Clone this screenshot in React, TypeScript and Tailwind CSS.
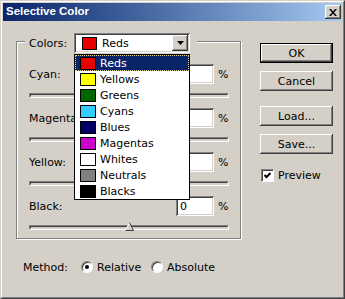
import React from "react";

type ColorItem = { name: string; swatch: string };

const COLORS: ColorItem[] = [
  { name: "Reds", swatch: "bg-[#e60000]" },
  { name: "Yellows", swatch: "bg-[#ffff00]" },
  { name: "Greens", swatch: "bg-[#006600]" },
  { name: "Cyans", swatch: "bg-[#33ccff]" },
  { name: "Blues", swatch: "bg-[#000066]" },
  { name: "Magentas", swatch: "bg-[#cc00cc]" },
  { name: "Whites", swatch: "bg-white" },
  { name: "Neutrals", swatch: "bg-[#808080]" },
  { name: "Blacks", swatch: "bg-black" },
];

const SLIDERS = ["Cyan:", "Magenta:", "Yellow:", "Black:"];

// classic win32 bevels
const raised =
  "shadow-[inset_-1px_-1px_#404040,inset_1px_1px_#ffffff,inset_-2px_-2px_#808080]";
const sunken =
  "shadow-[inset_1px_1px_#808080,inset_-1px_-1px_#ffffff,inset_2px_2px_#404040,inset_-2px_-2px_#d4d0c8]";

function Button({ label, primary }: { label: string; primary?: boolean }) {
  if (primary) {
    return (
      <div className="w-[73px] h-[20px] border border-black">
        <div className={`h-full flex items-center justify-center bg-[#d4d0c8] ${raised}`}>{label}</div>
      </div>
    );
  }
  return (
    <div className={`w-[73px] h-[20px] flex items-center justify-center bg-[#d4d0c8] ${raised}`}>{label}</div>
  );
}

function Radio({ checked }: { checked?: boolean }) {
  return (
    <div className="w-[12px] h-[12px] rounded-full bg-white border border-[#808080] border-r-white border-b-white shadow-[inset_1px_1px_#404040] flex items-center justify-center">
      {checked && <div className="w-[4px] h-[4px] rounded-full bg-black" />}
    </div>
  );
}

function SliderRow({ label, first }: { label: string; first: boolean }) {
  return (
    <div className={first ? "" : "mt-[10px]"}>
      <div className="flex items-center h-[20px]">
        <span>{label}</span>
        <div className={`ml-auto w-[38px] h-[20px] bg-white flex items-center pl-[4px] ${sunken}`}>0</div>
        <span className="ml-[4px] w-[11px]">%</span>
      </div>
      <div className="relative mt-[9px] h-[5px] border border-[#808080] border-r-white border-b-white">
        <div className="h-full border border-[#404040] border-r-[#d4d0c8] border-b-[#d4d0c8]" />
        <svg className="absolute left-[95px] top-[-4px]" width="9" height="9" viewBox="0 0 9 9">
          <polygon points="4.5,0.5 8.5,8.5 0.5,8.5" fill="#d4d0c8" />
          <path d="M0.5 8.5 L4.5 0.5" stroke="#ffffff" strokeWidth="1" fill="none" />
          <path d="M4.5 0.5 L8.5 8.5 L0.5 8.5" stroke="#404040" strokeWidth="1" fill="none" />
        </svg>
      </div>
    </div>
  );
}

export default function App() {
  return (
    <div className="w-[345px] h-[299px] bg-[#d4d0c8] border border-[#d4d0c8] border-r-[#404040] border-b-[#404040] font-['DejaVu_Sans',sans-serif] text-[11px] leading-none text-black">
      <div className="h-full flex flex-col border border-white border-r-[#808080] border-b-[#808080] p-px">
        {/* title bar */}
        <div className="h-[18px] flex items-center bg-linear-to-r from-[#0a246a] to-[#a6caf0] pl-[3px] pr-[1px]">
          <span className="font-['Liberation_Sans',sans-serif] font-bold text-[11.5px] text-white">Selective Color</span>
          <div className={`ml-auto w-[16px] h-[14px] bg-[#d4d0c8] flex items-center justify-center ${raised}`}>
            <svg width="8" height="7" viewBox="0 0 8 7">
              <path d="M0 0h2l2 2.5L6 0h2L5 3.5 8 7H6L4 4.5 2 7H0l3-3.5z" fill="#000" />
            </svg>
          </div>
        </div>

        <div className="flex-1 flex">
          {/* left column */}
          <div className="ml-[13px] pt-[20px] flex flex-col">
            <div className="w-[225px] h-[198px] border border-[#808080] shadow-[1px_1px_#ffffff,inset_1px_1px_#ffffff] flex flex-col">
              {/* legend */}
              <div className="-mt-[9px] ml-[8px] self-start flex items-center h-[20px] pl-[4px] pr-[7px] bg-[#d4d0c8]">
                <span className="w-[45px]">Colors:</span>
                <div className="relative">
                  <div className={`w-[116px] h-[20px] bg-white flex items-center pl-[8px] pr-[2px] ${sunken}`}>
                    <div className="w-[15px] h-[13px] border border-black bg-[#e60000]" />
                    <span className="ml-[5px]">Reds</span>
                    <div className={`ml-auto w-[16px] h-[16px] bg-[#d4d0c8] flex items-center justify-center ${raised}`}>
                      <svg width="7" height="4" viewBox="0 0 7 4">
                        <path d="M0 0h7L3.5 4z" fill="#000" />
                      </svg>
                    </div>
                  </div>
                  <div className="absolute z-10 left-0 top-[21px] w-[116px] border border-black bg-white">
                    {COLORS.map((c, i) => (
                      <div
                        key={c.name}
                        className={
                          i === 0
                            ? "h-[16px] flex items-center pl-[5px] bg-[#0a246a] text-white outline-1 outline-dotted outline-[#e8d48c] -outline-offset-1"
                            : "h-[16px] flex items-center pl-[5px]"
                        }
                      >
                        <div className={`w-[16px] h-[13px] border border-black ${c.swatch}`} />
                        <span className="ml-[4px]">{c.name}</span>
                      </div>
                    ))}
                  </div>
                </div>
              </div>

              <div className="pl-[12px] pr-[11px] mt-[11px]">
                {SLIDERS.map((s, i) => (
                  <SliderRow key={s} label={s} first={i === 0} />
                ))}
              </div>
            </div>

            {/* method */}
            <div className="mt-[20px] h-[16px] pl-[7px] flex items-center">
              <span className="w-[58px]">Method:</span>
              <Radio checked />
              <span className="ml-[4px] w-[54px]">Relative</span>
              <Radio />
              <span className="ml-[4px]">Absolute</span>
            </div>
          </div>

          {/* right column */}
          <div className="ml-auto mr-[9px] pt-[22px] w-[73px] flex flex-col">
            <Button label="OK" primary />
            <div className="mt-[8px]">
              <Button label="Cancel" />
            </div>
            <div className="mt-[15px]">
              <Button label="Load..." />
            </div>
            <div className="mt-[8px]">
              <Button label="Save..." />
            </div>
            <div className="mt-[15px] h-[13px] pl-[1px] flex items-center">
              <div className="w-[13px] h-[13px] bg-white border border-[#808080] border-r-white border-b-white shadow-[inset_1px_1px_#404040] flex items-center justify-center">
                <svg width="7" height="7" viewBox="0 0 7 7">
                  <polyline points="0.5,3 2.5,5 6.5,1" stroke="#000" strokeWidth="2" fill="none" />
                </svg>
              </div>
              <span className="ml-[4px]">Preview</span>
            </div>
          </div>
        </div>
      </div>
    </div>
  );
}
